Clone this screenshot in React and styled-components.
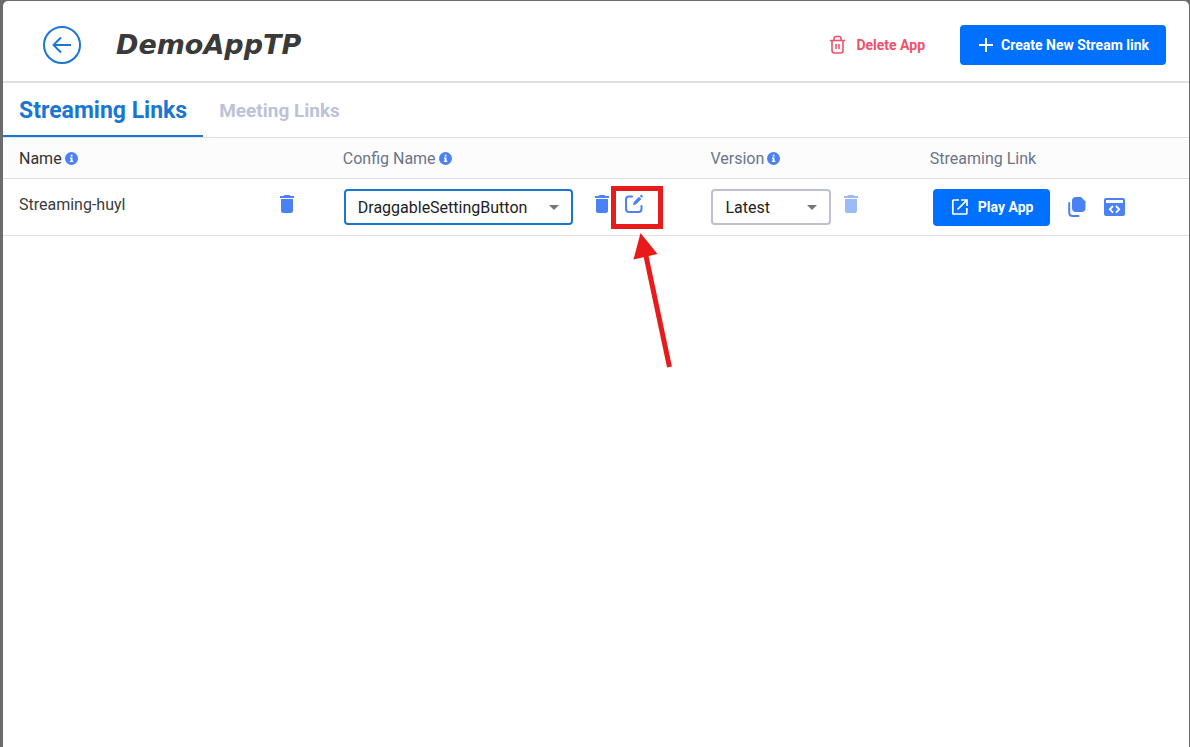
// Import Modules
import React, { useState } from "react";
import styled, { createGlobalStyle, ThemeProvider } from "styled-components";
import { MdDelete } from "react-icons/md";

const theme = {
  mainColor: "#1976d2",
  buttonColor: "#0070ff",
  iconColor: "#4a82f4",
  dangerColor: "#f0506a",
  lineColor: "#e0e0e0",
  markColor: "#e81b1c"
};

const GlobalStyle = createGlobalStyle`
  * {
    box-sizing: border-box;
  }
  body {
    margin: 0;
    background-color: #6b6b6b;
    font-family: Roboto, "Noto Sans", sans-serif;
    font-size: 16px;
    color: #3c3c3c;
  }
  button,
  select {
    font-family: inherit;
  }
`;

const Frame = styled.div`
  min-height: 100vh;
  padding: 1px 1px 0 3px;
  display: flex;
`;

const Page = styled.main`
  flex: 1;
  min-width: 0;
  border-radius: 5px 5px 0 0;
  background-color: white;
`;

const Header = styled.header`
  padding: 24px 23px 16px 40px;
  display: flex;
  align-items: center;
  border-bottom: 2px solid ${props => props.theme.lineColor};
`;

const BackButton = styled.button`
  width: 38px;
  height: 38px;
  padding: 0;
  display: flex;
  align-items: center;
  justify-content: center;
  border: 2px solid ${props => props.theme.mainColor};
  border-radius: 50%;
  background: none;
  color: ${props => props.theme.mainColor};
  cursor: pointer;
`;

const AppTitle = styled.h1`
  margin: 0 auto 0 35px;
  font-family: "DejaVu Sans", sans-serif;
  font-size: 27px;
  font-style: italic;
  font-weight: 700;
  line-height: 40px;
  color: #3a3a3a;
`;

const DeleteButton = styled.button`
  margin-right: 35px;
  padding: 0;
  display: flex;
  align-items: center;
  gap: 9px;
  border: 0;
  background: none;
  color: ${props => props.theme.dangerColor};
  font-size: 14px;
  font-weight: 700;
  cursor: pointer;
`;

const PrimaryButton = styled.button`
  height: ${props => (props.$small ? "37px" : "40px")};
  padding: 0 17px;
  display: flex;
  align-items: center;
  gap: 8px;
  border: 0;
  border-radius: 4px;
  background-color: ${props => props.theme.buttonColor};
  color: white;
  font-size: 14px;
  font-weight: 700;
  white-space: nowrap;
  cursor: pointer;
`;

const Tabs = styled.nav`
  height: 55px;
  display: flex;
  border-bottom: 1px solid ${props => props.theme.lineColor};
`;

const Tab = styled.button`
  padding: 2px 16px 0;
  border: 0;
  border-bottom: 2px solid
    ${props => (props.$active ? props.theme.mainColor : "transparent")};
  background: none;
  color: ${props => (props.$active ? props.theme.mainColor : "#bcc2d8")};
  font-size: ${props => (props.$active ? "23px" : "19px")};
  font-weight: 700;
  cursor: pointer;
`;

const Table = styled.table`
  width: 100%;
  table-layout: fixed;
  border-collapse: separate;
  border-spacing: 0;
`;

const Column = styled.col`
  width: ${props => props.$width};
`;

const HeadCell = styled.th`
  height: 41px;
  padding: 0 16px;
  border-bottom: 1px solid ${props => props.theme.lineColor};
  background-color: #fcfcfc;
  color: ${props => (props.$strong ? "#333333" : "#6b748a")};
  font-weight: 400;
  text-align: left;
`;

const HeadLabel = styled.span`
  display: flex;
  align-items: center;
  gap: 3px;
`;

const Cell = styled.td`
  height: 57px;
  padding: 0 16px;
  border-bottom: 1px solid ${props => props.theme.lineColor};
`;

const CellContent = styled.div`
  padding-left: ${props => (props.$inset ? "1px" : "0")};
  display: flex;
  align-items: center;
  justify-content: ${props => (props.$spread ? "space-between" : "flex-start")};
  gap: 8px;
`;

const StreamName = styled.span`
  padding-bottom: 4px;
  line-height: 24px;
`;

const IconButton = styled.button`
  position: relative;
  padding: 0 0 ${props => (props.$level ? "0" : "6px")};
  display: flex;
  border: 0;
  background: none;
  color: ${props => props.theme.iconColor};
  cursor: pointer;
  &:disabled {
    opacity: 0.55;
    cursor: default;
  }
`;

const NameDelete = styled(IconButton)`
  margin-right: 12px;
`;

const ConfigActions = styled.div`
  margin-left: 9px;
  display: flex;
  gap: 8px;
`;

const LinkActions = styled.div`
  padding-left: 3px;
  display: flex;
  align-items: center;
  gap: 18px;
`;

const SelectBox = styled.label`
  width: ${props => props.$width};
  display: grid;
  align-items: center;
  > * {
    grid-area: 1 / 1;
  }
  svg {
    justify-self: end;
    margin-right: 14px;
    pointer-events: none;
  }
`;

const Select = styled.select`
  width: 100%;
  height: 36px;
  padding: 0 32px 0 12px;
  appearance: none;
  border: 2px solid
    ${props => (props.$active ? props.theme.mainColor : "#bcc0d0")};
  border-radius: 4px;
  background-color: white;
  color: #202124;
  font-size: 16px;
  outline: none;
`;

// Frame and arrow that lie over the edit icon
const Marker = styled.svg`
  position: absolute;
  top: -6px;
  left: -11px;
  z-index: 1;
  overflow: visible;
  pointer-events: none;
  color: ${props => props.theme.markColor};
`;

const InfoIcon = () => (
  <svg width="13" height="13" viewBox="0 0 13 13" aria-hidden="true">
    <circle cx="6.5" cy="6.5" r="6.5" fill="#4a82f4" />
    <path
      d="M5.7 2.8h1.8v1.6H5.7zM5 5.4h2.5v3.3h.8V10H4.9V8.7h.8v-2H5z"
      fill="#fff"
    />
  </svg>
);

const BackArrow = () => (
  <svg width="20" height="20" viewBox="0 0 20 20" fill="none" aria-hidden="true">
    <path
      d="M9 2.5 1.5 10 9 17.5M1.5 10H19"
      stroke="currentColor"
      strokeWidth="2"
      strokeLinejoin="round"
    />
  </svg>
);

const TrashOutline = () => (
  <svg width="18" height="20" viewBox="0 0 18 20" fill="none" aria-hidden="true">
    <path
      d="M1.5 5.5h14M5 5V3.5q0-2 2-2h3q2 0 2 2V5M3 6v9.500q0 2.500 2.500 2.500h6q2.500 0 2.500-2.500V6M7 9.500v4M10 9.500v4"
      stroke="currentColor"
      strokeWidth="1.6"
      strokeLinecap="round"
    />
  </svg>
);

const PlusIcon = () => (
  <svg width="16" height="16" viewBox="0 0 16 16" fill="none" aria-hidden="true">
    <path d="M9 1v14M2 8h14" stroke="currentColor" strokeWidth="2" />
  </svg>
);

const CaretIcon = () => (
  <svg width="10" height="5" viewBox="0 0 10 5" aria-hidden="true">
    <path d="M0 0h10L5 5z" fill="#757575" />
  </svg>
);

const EditIcon = () => (
  <svg width="24" height="24" viewBox="0 0 24 24" fill="none" aria-hidden="true">
    <path
      d="M10 4.500H7q-3 0-3 3V17q0 3 3 3h9.500q3 0 3-3v-3"
      stroke="currentColor"
      strokeWidth="2"
      strokeLinecap="round"
      strokeLinejoin="round"
    />
    <path
      d="m11.5 12.500.8-2.500 4.700-4.700 1.800 1.800-4.700 4.700zM18.300 4l.5-.5q.7-.5 1.300.1t.1 1.300l-.5.5z"
      fill="currentColor"
      stroke="currentColor"
      strokeWidth="1"
      strokeLinejoin="round"
    />
  </svg>
);

const OpenIcon = () => (
  <svg width="20" height="20" viewBox="0 0 20 20" fill="none" aria-hidden="true">
    <path
      d="M9 3H3.500q-.7 0-.7.7v12.600q0 .7.7.7h12.600q.7 0 .7-.7V11M11 3h6v6M17 3l-9.500 9.500"
      stroke="currentColor"
      strokeWidth="1.7"
    />
  </svg>
);

const CopyIcon = () => (
  <svg width="18" height="20" viewBox="0 0 18 20" fill="none" aria-hidden="true">
    <path
      d="M8 0h5l4.500 4.500V11q0 4-4 4H8q-4 0-4-4V4q0-4 4-4z"
      fill="currentColor"
    />
    <path
      d="M1.200 6v9.500q0 3.500 3.500 3.500h5.800"
      stroke="currentColor"
      strokeWidth="2"
      strokeLinecap="round"
    />
  </svg>
);

const EmbedIcon = () => (
  <svg width="21" height="18" viewBox="0 0 21 18" fill="none" aria-hidden="true">
    <rect width="21" height="18" rx="2" fill="currentColor" />
    <path d="M2 2h17v3H2z" fill="#fff" />
    <path
      d="M9 8l-3.200 3.300L9 14.600M12 8l3.200 3.300-3.200 3.300"
      stroke="#fff"
      strokeWidth="1.8"
    />
  </svg>
);

const EditMarker = () => (
  <Marker width="52" height="183" viewBox="0 0 52 183" aria-hidden="true">
    <rect
      x="2.5"
      y="2.5"
      width="47"
      height="38"
      fill="none"
      stroke="currentColor"
      strokeWidth="5"
    />
    <path d="M35 70 58.500 181" stroke="currentColor" strokeWidth="5" />
    <path d="M29.500 47 46.500 68 22.500 73.500z" fill="currentColor" />
  </Marker>
);

const App = () => {
  const [tab, setTab] = useState("streaming");

  return (
    <ThemeProvider theme={theme}>
      <GlobalStyle />
      <Frame>
        <Page>
          <Header>
            <BackButton aria-label="Back">
              <BackArrow />
            </BackButton>
            <AppTitle>DemoAppTP</AppTitle>
            <DeleteButton>
              <TrashOutline />
              Delete App
            </DeleteButton>
            <PrimaryButton>
              <PlusIcon />
              Create New Stream link
            </PrimaryButton>
          </Header>

          <Tabs>
            <Tab
              $active={tab === "streaming"}
              onClick={() => setTab("streaming")}
            >
              Streaming Links
            </Tab>
            <Tab $active={tab === "meeting"} onClick={() => setTab("meeting")}>
              Meeting Links
            </Tab>
          </Tabs>

          <Table>
            <colgroup>
              <Column $width="27.3%" />
              <Column $width="31%" />
              <Column $width="18.5%" />
              <Column />
            </colgroup>
            <thead>
              <tr>
                <HeadCell $strong>
                  <HeadLabel>
                    Name <InfoIcon />
                  </HeadLabel>
                </HeadCell>
                <HeadCell>
                  <HeadLabel>
                    Config Name <InfoIcon />
                  </HeadLabel>
                </HeadCell>
                <HeadCell>
                  <HeadLabel>
                    Version <InfoIcon />
                  </HeadLabel>
                </HeadCell>
                <HeadCell>Streaming Link</HeadCell>
              </tr>
            </thead>
            <tbody>
              <tr>
                {/* Name */}
                <Cell>
                  <CellContent $spread>
                    <StreamName>Streaming-huyl</StreamName>
                    <NameDelete aria-label="Delete stream">
                      <MdDelete size={24} />
                    </NameDelete>
                  </CellContent>
                </Cell>
                {/* Config */}
                <Cell>
                  <CellContent $inset>
                    <SelectBox $width="229px">
                      <Select $active aria-label="Config name">
                        <option>DraggableSettingButton</option>
                      </Select>
                      <CaretIcon />
                    </SelectBox>
                    <ConfigActions>
                      <IconButton aria-label="Delete config">
                        <MdDelete size={24} />
                      </IconButton>
                      <IconButton aria-label="Edit config">
                        <EditIcon />
                        <EditMarker />
                      </IconButton>
                    </ConfigActions>
                  </CellContent>
                </Cell>
                {/* Version */}
                <Cell>
                  <CellContent $inset>
                    <SelectBox $width="120px">
                      <Select aria-label="Version">
                        <option>Latest</option>
                      </Select>
                      <CaretIcon />
                    </SelectBox>
                    <IconButton disabled aria-label="Delete version">
                      <MdDelete size={24} />
                    </IconButton>
                  </CellContent>
                </Cell>
                {/* Link */}
                <Cell>
                  <LinkActions>
                    <PrimaryButton $small>
                      <OpenIcon />
                      Play App
                    </PrimaryButton>
                    <IconButton $level aria-label="Copy link">
                      <CopyIcon />
                    </IconButton>
                    <IconButton $level aria-label="Embed code">
                      <EmbedIcon />
                    </IconButton>
                  </LinkActions>
                </Cell>
              </tr>
            </tbody>
          </Table>
        </Page>
      </Frame>
    </ThemeProvider>
  );
};

export default App;
